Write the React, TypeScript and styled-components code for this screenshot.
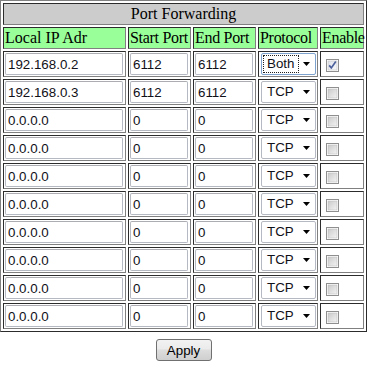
import React from "react";
import styled, { createGlobalStyle } from "styled-components";

const Global = createGlobalStyle`
  html, body { margin: 0; padding: 0; background: #ffffff; }
  body { font-family: "Liberation Serif", "Times New Roman", serif; font-size: 16px; color: #000; }
`;

const Table = styled.table`
  width: 367px;
  table-layout: fixed;
  border-collapse: separate;
  border-spacing: 2px;
  border: 1px outset #808080;
`;

const Col = styled.col<{ $w: number }>`
  width: ${(p) => p.$w}px;
`;

const Cell = styled.td<{ $bg?: string; $align?: string; $tight?: boolean }>`
  box-sizing: border-box;
  border: 1px inset #808080;
  padding: 1px;
  background: ${(p) => p.$bg || "transparent"};
  text-align: ${(p) => p.$align || "left"};
  vertical-align: middle;
  white-space: nowrap;
  font-family: "Liberation Serif", "Times New Roman", serif;
  font-size: 16px;
  line-height: 18px;
  letter-spacing: ${(p) => (p.$tight ? "-0.3px" : "normal")};
`;

const TextInput = styled.input<{ $w: number }>`
  box-sizing: border-box;
  display: block;
  width: ${(p) => p.$w}px;
  height: 22px;
  margin: 0;
  padding: 1px 2px;
  border: 1px solid #b5b9c2;
  border-top-color: #abadb3;
  border-radius: 2px;
  background: #fff;
  font-family: "Liberation Sans", Arial, sans-serif;
  font-size: 13.33px;
  color: #101018;
  outline: none;
`;

const SelectBox = styled.div<{ $focus?: boolean }>`
  box-sizing: border-box;
  display: flex;
  align-items: center;
  width: 55px;
  height: 22px;
  margin: 0 0 0 1px;
  padding: 1px;
  border: 1px solid ${(p) => (p.$focus ? "#7da2ce" : "#b5b9c2")};
  border-radius: 2px;
  background: #fff;
  font-family: "Liberation Sans", Arial, sans-serif;
  font-size: 13.33px;
  color: #101018;
`;

const SelectText = styled.span<{ $focus?: boolean }>`
  flex: 1;
  height: 16px;
  line-height: 16px;
  padding-left: 3px;
  border: 1px dotted ${(p) => (p.$focus ? "#202020" : "transparent")};
`;

const Arrow = styled.span`
  display: flex;
  align-items: center;
  justify-content: center;
  width: 15px;
  height: 16px;
`;

const CheckWrap = styled.span`
  display: block;
  width: 13px;
  height: 13px;
  margin: 3px 0 3px 4px;
`;

const ButtonRow = styled.div`
  display: flex;
  justify-content: center;
  padding-top: 7px;
`;

const Button = styled.button`
  box-sizing: border-box;
  width: 56px;
  height: 22px;
  padding: 0;
  border: 1px solid #707070;
  border-radius: 3px;
  background: linear-gradient(#f2f2f2 0%, #ebebeb 45%, #dddddd 50%, #cfcfcf 100%);
  font-family: "Liberation Sans", Arial, sans-serif;
  font-size: 13.33px;
  color: #000;
`;

const Check = ({ checked }: { checked: boolean }) => (
  <CheckWrap>
    <svg width="13" height="13" viewBox="0 0 13 13">
      <defs>
        <linearGradient id={checked ? "cg1" : "cg0"} x1="0" y1="0" x2="1" y2="1">
          <stop offset="0" stopColor={checked ? "#dfe3ea" : "#cbcbcb"} />
          <stop offset="1" stopColor={checked ? "#f6f7f9" : "#f3f3f3"} />
        </linearGradient>
      </defs>
      <rect x="0.5" y="0.5" width="12" height="12" fill="#fff" stroke="#8f8f8f" />
      <rect x="2" y="2" width="9" height="9" fill={`url(#${checked ? "cg1" : "cg0"})`} stroke="#b8b8b8" strokeWidth="0.5" />
      {checked && (
        <path d="M3.2 6.4 L5.3 8.9 L9.8 2.6" fill="none" stroke="#4b5f9b" strokeWidth="1.7" />
      )}
    </svg>
  </CheckWrap>
);

type Row = { ip: string; s: string; e: string; p: string; en: boolean; focus?: boolean };

const rows: Row[] = [
  { ip: "192.168.0.2", s: "6112", e: "6112", p: "Both", en: true, focus: true },
  { ip: "192.168.0.3", s: "6112", e: "6112", p: "TCP", en: false },
  ...Array.from({ length: 8 }, () => ({ ip: "0.0.0.0", s: "0", e: "0", p: "TCP", en: false })),
];

const GREEN = "#99ff99";

export default function App() {
  return (
    <>
      <Global />
      <Table>
        <colgroup>
          <Col $w={123} />
          <Col $w={63} />
          <Col $w={63} />
          <Col $w={60} />
          <Col $w={44} />
        </colgroup>
        <tbody>
          <tr>
            <Cell colSpan={5} $bg="#cccccc" $align="center">Port Forwarding</Cell>
          </tr>
          <tr>
            <Cell $bg={GREEN}>Local IP Adr</Cell>
            <Cell $bg={GREEN} $tight>Start Port</Cell>
            <Cell $bg={GREEN} $tight>End Port</Cell>
            <Cell $bg={GREEN} $tight>Protocol</Cell>
            <Cell $bg={GREEN} $tight>Enable</Cell>
          </tr>
          {rows.map((r, i) => (
            <tr key={i}>
              <Cell><TextInput $w={118} readOnly value={r.ip} /></Cell>
              <Cell><TextInput $w={58} readOnly value={r.s} /></Cell>
              <Cell><TextInput $w={58} readOnly value={r.e} /></Cell>
              <Cell>
                <SelectBox $focus={r.focus}>
                  <SelectText $focus={r.focus}>{r.p}</SelectText>
                  <Arrow>
                    <svg width="7" height="4" viewBox="0 0 7 4">
                      <path d="M0 0 H7 L3.5 4 Z" fill="#000" />
                    </svg>
                  </Arrow>
                </SelectBox>
              </Cell>
              <Cell><Check checked={r.en} /></Cell>
            </tr>
          ))}
        </tbody>
      </Table>
      <ButtonRow>
        <Button type="button">Apply</Button>
      </ButtonRow>
    </>
  );
}
